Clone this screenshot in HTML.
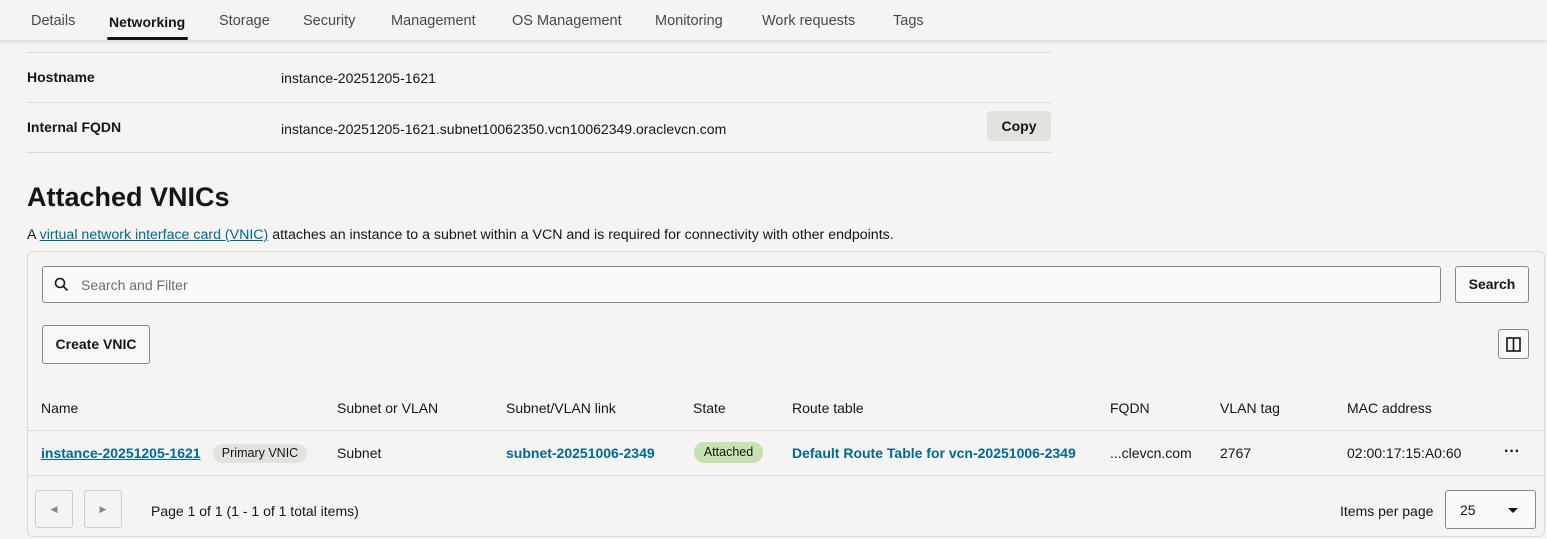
<!DOCTYPE html>
<html><head><meta charset="utf-8"><style>
*{margin:0;padding:0;box-sizing:border-box}
body{width:1547px;height:539px;background:#f5f4f2;font-family:"Liberation Sans",sans-serif;color:#161513;position:relative;overflow:hidden;font-size:14px}
.a{position:absolute;white-space:nowrap}
.tabs{position:absolute;left:0;top:0;width:1547px;height:40px;background:#f5f4f2;box-shadow:0 2px 4px rgba(0,0,0,.12);z-index:2}
.tab{position:absolute;top:13px;font-size:14.5px;color:#4a4845}
.hr{position:absolute;left:27px;width:1024px;height:1px;background:#dcdad7}
.b{font-weight:bold}
.link{color:#00688c;font-weight:bold}
.btn{position:absolute;border:1px solid #8a8886;border-radius:3px;background:#f9f8f7;font-weight:bold;font-size:14px;text-align:center}
</style></head><body>
<div class="tabs">
<span class="tab" style="left:31px">Details</span>
<span class="tab" style="left:109px;color:#161513;font-weight:bold;font-size:14px;top:14px">Networking</span>
<div class="a" style="left:107px;top:37px;width:81px;height:3px;background:#161513;border-radius:2px"></div>
<span class="tab" style="left:219px">Storage</span>
<span class="tab" style="left:303px">Security</span>
<span class="tab" style="left:391px">Management</span>
<span class="tab" style="left:512px">OS Management</span>
<span class="tab" style="left:655px">Monitoring</span>
<span class="tab" style="left:762px">Work requests</span>
<span class="tab" style="left:893px">Tags</span>
</div>
<div class="hr" style="top:52px"></div>
<div class="a b" style="left:27px;top:69px">Hostname</div>
<div class="a" style="left:281px;top:70px">instance-20251205-1621</div>
<div class="hr" style="top:102px"></div>
<div class="a b" style="left:27px;top:119px">Internal FQDN</div>
<div class="a" style="left:281px;top:121px">instance-20251205-1621.subnet10062350.vcn10062349.oraclevcn.com</div>
<div class="a b" style="left:987px;top:111px;width:64px;height:30px;background:#e4e2df;border-radius:4px;text-align:center;line-height:30px">Copy</div>
<div class="hr" style="top:152px"></div>
<div class="a b" style="left:27px;top:182px;font-size:27px">Attached VNICs</div>
<div class="a" style="left:27px;top:227px;font-size:14.2px">A <span style="color:#00688c;text-decoration:underline">virtual network interface card (VNIC)</span> attaches an instance to a subnet within a VCN and is required for connectivity with other endpoints.</div>
<div class="a" style="left:27px;top:251px;width:1518px;height:286px;border:1px solid #dcdad7;border-radius:6px"></div>
<div class="a" style="left:42px;top:266px;width:1399px;height:37px;border:1px solid #8a8886;border-radius:3px;background:#fbfaf9"></div>
<svg class="a" style="left:54px;top:277px" width="15" height="15" viewBox="0 0 15 15"><circle cx="6" cy="6" r="4.5" fill="none" stroke="#161513" stroke-width="1.6"/><path d="M9.5 9.5L13.5 13.5" stroke="#161513" stroke-width="1.6"/></svg>
<div class="a" style="left:81px;top:277px;color:#6f6c69">Search and Filter</div>
<div class="btn" style="left:1455px;top:266px;width:74px;height:37px;line-height:35px">Search</div>
<div class="btn" style="left:42px;top:325px;width:108px;height:39px;line-height:37px">Create VNIC</div>
<div class="btn" style="left:1498px;top:329px;width:31px;height:30px"><svg style="margin-top:7px" width="15" height="15" viewBox="0 0 15 15"><rect x="1" y="1" width="13" height="13" fill="none" stroke="#161513" stroke-width="1.6"/><path d="M7.5 1V14" stroke="#161513" stroke-width="1.6"/></svg></div>
<div class="a" style="left:41px;top:400px">Name</div>
<div class="a" style="left:337px;top:400px">Subnet or VLAN</div>
<div class="a" style="left:506px;top:400px">Subnet/VLAN link</div>
<div class="a" style="left:693px;top:400px">State</div>
<div class="a" style="left:792px;top:400px">Route table</div>
<div class="a" style="left:1110px;top:400px">FQDN</div>
<div class="a" style="left:1220px;top:400px">VLAN tag</div>
<div class="a" style="left:1347px;top:400px">MAC address</div>
<div class="a" style="left:28px;top:430px;width:1516px;height:1px;background:#dcdad7"></div>
<div class="a link" style="left:41px;top:445px;text-decoration:underline">instance-20251205-1621</div>
<div class="a" style="left:213px;top:444px;width:94px;height:19px;background:#e4e2df;border-radius:10px;font-size:12.5px;text-align:center;line-height:19px">Primary VNIC</div>
<div class="a" style="left:337px;top:445px">Subnet</div>
<div class="a link" style="left:506px;top:445px">subnet-20251006-2349</div>
<div class="a" style="left:694px;top:442px;width:69px;height:21px;background:#c7e1b2;border-radius:10px;font-size:12.5px;text-align:center;line-height:21px">Attached</div>
<div class="a link" style="left:792px;top:445px">Default Route Table for vcn-20251006-2349</div>
<div class="a" style="left:1110px;top:445px">...clevcn.com</div>
<div class="a" style="left:1220px;top:445px">2767</div>
<div class="a" style="left:1347px;top:445px">02:00:17:15:A0:60</div>
<div class="a b" style="left:1504px;top:443px;font-size:16px">···</div>
<div class="a" style="left:28px;top:475px;width:1516px;height:1px;background:#dcdad7"></div>
<div class="a" style="left:35px;top:490px;width:38px;height:38px;border:1px solid #cfcdca;border-radius:3px;color:#8a8886;font-size:9px;text-align:center;line-height:36px">◀</div>
<div class="a" style="left:84px;top:490px;width:38px;height:38px;border:1px solid #cfcdca;border-radius:3px;color:#8a8886;font-size:9px;text-align:center;line-height:36px">▶</div>
<div class="a" style="left:151px;top:503px">Page 1 of 1 (1 - 1 of 1 total items)</div>
<div class="a" style="left:1340px;top:503px">Items per page</div>
<div class="a" style="left:1445px;top:490px;width:91px;height:39px;border:1px solid #8a8886;border-radius:3px;background:#fbfaf9"></div>
<div class="a" style="left:1460px;top:502px">25</div>
<div class="a" style="left:1508px;top:508px;width:0;height:0;border-left:5px solid transparent;border-right:5px solid transparent;border-top:5px solid #161513"></div>
</body></html>
